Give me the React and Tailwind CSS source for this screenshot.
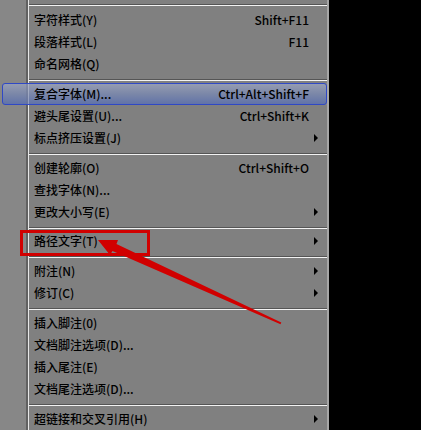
import React from "react";

const FONT = { fontFamily: '"Noto Sans CJK SC", "Noto Sans", sans-serif' };

function Arrow() {
  return (
    <div className="w-0 h-0 border-y-[4px] border-y-transparent border-l-[4px] border-l-black" />
  );
}

function Item({ label, shortcut, sub }) {
  return (
    <div className="flex h-[22px]">
      <div className="w-[26px] bg-[#878787]" />
      <div className="w-[2px] bg-[#616161]" />
      <div className="w-[1px] bg-[#e6e6e6]" />
      <div className="flex flex-1 items-center pl-[5px]">
        <span className="flex-1 text-[12px] font-medium leading-none text-black">{label}</span>
        {shortcut && <span className="text-[12px] font-medium leading-none text-black">{shortcut}</span>}
        <div className="w-[18px] h-full flex items-center pl-[5px]">{sub && <Arrow />}</div>
      </div>
    </div>
  );
}

function Sep({ top }) {
  return (
    <div className={top ? "flex h-[9px]" : "flex h-[8px]"}>
      <div className="w-[26px] bg-[#878787]" />
      <div className="w-[2px] bg-[#616161]" />
      <div className="w-[1px] bg-[#e6e6e6]" />
      <div className="flex-1 flex flex-col pt-[4px]">
        <div className="h-[1px] bg-[#555555]" />
        <div className="h-[1px] bg-[#f2f2f2]" />
      </div>
    </div>
  );
}

function Highlight({ label, shortcut }) {
  return (
    <div className="flex h-[22px] bg-[#878787]">
      <div className="w-[2px]" />
      <div className="flex-1 flex items-center rounded-[3px] border border-[#2f48c6] bg-gradient-to-b from-[#959cb1] via-[#7b87a8] to-[#6273a8]">
        <div className="w-[23px]" />
        <div className="w-[2px] h-full bg-[#6a7290]/40" />
        <div className="w-[1px] h-full bg-[#d8dcea]/40" />
        <div className="w-[5px]" />
        <span className="flex-1 text-[12px] font-medium leading-none text-black">{label}</span>
        <span className="text-[12px] font-medium leading-none text-black">{shortcut}</span>
        <div className="w-[17px]" />
      </div>
    </div>
  );
}

export default function App() {
  return (
    <div className="relative w-[421px] h-[430px] bg-black overflow-hidden flex" style={FONT}>
      <div className="w-[329px] h-full bg-[#808080] border-r-2 border-[#a6a6a6] flex flex-col">
        <Sep top />
        <Item label="字符样式(Y)" shortcut="Shift+F11" />
        <Item label="段落样式(L)" shortcut="F11" />
        <Item label="命名网格(Q)" />
        <Sep />
        <Highlight label="复合字体(M)..." shortcut="Ctrl+Alt+Shift+F" />
        <Item label="避头尾设置(U)..." shortcut="Ctrl+Shift+K" />
        <Item label="标点挤压设置(J)" sub />
        <Sep />
        <Item label="创建轮廓(O)" shortcut="Ctrl+Shift+O" />
        <Item label="查找字体(N)..." />
        <Item label="更改大小写(E)" sub />
        <Sep />
        <Item label="路径文字(T)" sub />
        <Sep />
        <Item label="附注(N)" sub />
        <Item label="修订(C)" sub />
        <Sep />
        <Item label="插入脚注(0)" />
        <Item label="文档脚注选项(D)..." />
        <Item label="插入尾注(E)" />
        <Item label="文档尾注选项(D)..." />
        <Sep />
        <Item label="超链接和交叉引用(H)" sub />
      </div>

      <div className="absolute left-[20px] top-[230px] w-[130px] h-[26px] border-[3px] border-[#d10000]" />
      <svg className="absolute left-0 top-0 pointer-events-none" width="421" height="430" viewBox="0 0 421 430">
        <polygon
          points="98,240 118,240 116.5,244 281.3,322.6 280.5,324.2 112.5,251 110,255"
          fill="#d10000"
        />
      </svg>
    </div>
  );
}
